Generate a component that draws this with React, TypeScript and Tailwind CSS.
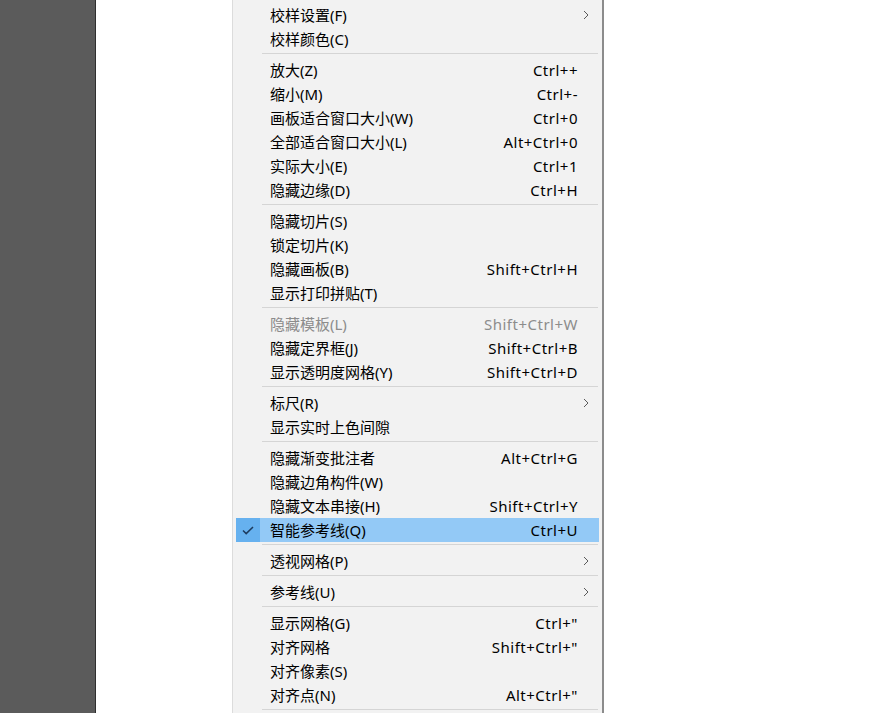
import React from "react";

type Item =
  | { type: "sep" }
  | {
      type: "item";
      label: string;
      shortcut?: string;
      sub?: boolean;
      disabled?: boolean;
      checked?: boolean;
      active?: boolean;
    };

const S: Item = { type: "sep" };
const I = (label: string, shortcut?: string, extra: Partial<Item> = {}): Item =>
  ({ type: "item", label, shortcut, ...extra } as Item);

const items: Item[] = [
  I("校样设置(F)", undefined, { sub: true } as any),
  I("校样颜色(C)"),
  S,
  I("放大(Z)", "Ctrl++"),
  I("缩小(M)", "Ctrl+-"),
  I("画板适合窗口大小(W)", "Ctrl+0"),
  I("全部适合窗口大小(L)", "Alt+Ctrl+0"),
  I("实际大小(E)", "Ctrl+1"),
  I("隐藏边缘(D)", "Ctrl+H"),
  S,
  I("隐藏切片(S)"),
  I("锁定切片(K)"),
  I("隐藏画板(B)", "Shift+Ctrl+H"),
  I("显示打印拼贴(T)"),
  S,
  I("隐藏模板(L)", "Shift+Ctrl+W", { disabled: true } as any),
  I("隐藏定界框(J)", "Shift+Ctrl+B"),
  I("显示透明度网格(Y)", "Shift+Ctrl+D"),
  S,
  I("标尺(R)", undefined, { sub: true } as any),
  I("显示实时上色间隙"),
  S,
  I("隐藏渐变批注者", "Alt+Ctrl+G"),
  I("隐藏边角构件(W)"),
  I("隐藏文本串接(H)", "Shift+Ctrl+Y"),
  I("智能参考线(Q)", "Ctrl+U", { checked: true, active: true } as any),
  S,
  I("透视网格(P)", undefined, { sub: true } as any),
  S,
  I("参考线(U)", undefined, { sub: true } as any),
  S,
  I("显示网格(G)", 'Ctrl+"'),
  I("对齐网格", 'Shift+Ctrl+"'),
  I("对齐像素(S)"),
  I("对齐点(N)", 'Alt+Ctrl+"'),
  S,
];

function Check() {
  return (
    <svg width="12" height="9" viewBox="0 0 12 9" fill="none">
      <path d="M1 4.5 L4.2 7.6 L11 1" stroke="#1d3b5e" strokeWidth="1.5" />
    </svg>
  );
}

function Chevron() {
  return (
    <svg width="6" height="10" viewBox="0 0 6 10" fill="none">
      <path d="M1 1 L5 5 L1 9" stroke="#5a5a5a" strokeWidth="1" />
    </svg>
  );
}

export default function App() {
  return (
    <div
      className="flex h-[713px] w-[870px] overflow-hidden bg-white text-[15px] leading-none text-[#000]"
      style={{ fontFamily: "'Noto Sans', 'Noto Sans CJK SC', sans-serif" }}
    >
      <div className="h-full w-[96px] shrink-0 border-r border-[#2f2f2f] bg-[#5b5b5b]" />
      <div className="w-[136px] shrink-0" />
      <div className="flex h-full w-[372px] shrink-0 flex-col border-l border-[#dcdcdc] border-r-2 border-r-[#8c8c8c] bg-[#f2f2f2] px-[3px] pt-[3px]">
        {items.map((it, i) =>
          it.type === "sep" ? (
            <div key={i} className="shrink-0 pb-[4px] pl-[26px] pr-[1px] pt-[2px]">
              <div className="h-px bg-[#d5d5d5]" />
            </div>
          ) : (
            <div
              key={i}
              className={`flex h-[24px] shrink-0 items-center ${
                it.active ? "bg-[#93c9f6]" : ""
              } ${it.disabled ? "text-[#8c8c8c]" : ""}`}
            >
              <div
                className={`flex h-full w-[24px] shrink-0 items-center justify-center ${
                  it.active ? "bg-[#66b1ef]" : ""
                }`}
              >
                {it.checked ? <Check /> : null}
              </div>
              <div className="flex-1 whitespace-nowrap pl-[10px]">{it.label}</div>
              {it.shortcut ? (
                <div className="whitespace-nowrap pr-[21px] tracking-[0.5px]">{it.shortcut}</div>
              ) : null}
              {it.sub ? (
                <div className="flex pr-[10px]">
                  <Chevron />
                </div>
              ) : null}
            </div>
          )
        )}
      </div>
    </div>
  );
}
